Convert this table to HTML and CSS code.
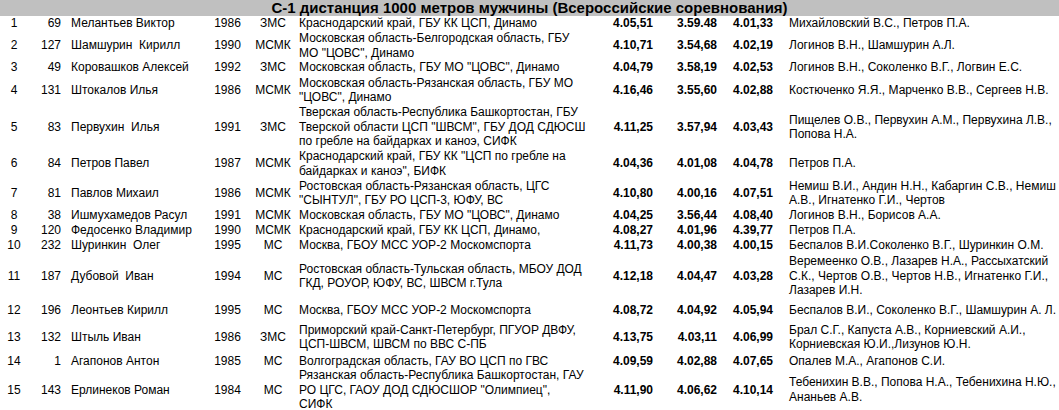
FILE: index.html
```html
<!DOCTYPE html>
<html lang="ru">
<head>
<meta charset="utf-8">
<title>С-1 дистанция 1000 метров мужчины</title>
<link rel="stylesheet" href="styles.css">
</head>
<body>
<div class="title">С-1 дистанция 1000 метров мужчины (Всероссийские соревнования)</div>
<table class="results">
<colgroup>
<col class="c-place"><col class="c-bib"><col class="c-name"><col class="c-year"><col class="c-rank"><col class="c-org"><col class="c-t1"><col class="c-t2"><col class="c-t3"><col class="c-coach">
</colgroup>
<tbody>
<tr class="h1"><td class="place">1</td><td class="bib">69</td><td class="name">Мелантьев Виктор</td><td class="year">1986</td><td class="rank">ЗМС</td><td class="org">Краснодарский край, ГБУ КК ЦСП, Динамо</td><td class="t1">4.05,51</td><td class="t2">3.59.48</td><td class="t3">4.01,33</td><td class="coach">Михайловский В.С., Петров П.А.</td></tr>
<tr class="h2"><td class="place">2</td><td class="bib">127</td><td class="name">Шамшурин&nbsp; Кирилл</td><td class="year">1990</td><td class="rank">МСМК</td><td class="org">Московская область-Белгородская область, ГБУ<br>МО "ЦОВС", Динамо</td><td class="t1">4.10,71</td><td class="t2">3.54,68</td><td class="t3">4.02,19</td><td class="coach">Логинов В.Н., Шамшурин А.Л.</td></tr>
<tr class="h1"><td class="place">3</td><td class="bib">49</td><td class="name">Коровашков Алексей</td><td class="year">1992</td><td class="rank">ЗМС</td><td class="org">Московская область, ГБУ МО "ЦОВС", Динамо</td><td class="t1">4.04,79</td><td class="t2">3.58,19</td><td class="t3">4.02,53</td><td class="coach">Логинов В.Н., Соколенко В.Г., Логвин Е.С.</td></tr>
<tr class="h2b"><td class="place">4</td><td class="bib">131</td><td class="name">Штокалов Илья</td><td class="year">1986</td><td class="rank">МСМК</td><td class="org">Московская область-Рязанская область, ГБУ МО<br>"ЦОВС", Динамо</td><td class="t1">4.16,46</td><td class="t2">3.55,60</td><td class="t3">4.02,88</td><td class="coach">Костюченко Я.Я., Марченко В.В., Сергеев Н.В.</td></tr>
<tr class="h3"><td class="place">5</td><td class="bib">83</td><td class="name">Первухин&nbsp; Илья</td><td class="year">1991</td><td class="rank">ЗМС</td><td class="org">Тверская область-Республика Башкортостан, ГБУ<br>Тверской области ЦСП "ШВСМ", ГБУ ДОД СДЮСШ<br>по гребле на байдарках и каноэ, СИФК</td><td class="t1">4.11,25</td><td class="t2">3.57,94</td><td class="t3">4.03,43</td><td class="coach">Пищелев О.В., Первухин А.М., Первухина Л.В.,<br>Попова Н.А.</td></tr>
<tr class="h2"><td class="place">6</td><td class="bib">84</td><td class="name">Петров Павел</td><td class="year">1987</td><td class="rank">МСМК</td><td class="org">Краснодарский край, ГБУ КК "ЦСП по гребле на<br>байдарках и каноэ", БИФК</td><td class="t1">4.04,36</td><td class="t2">4.01,08</td><td class="t3">4.04,78</td><td class="coach">Петров П.А.</td></tr>
<tr class="h2b"><td class="place">7</td><td class="bib">81</td><td class="name">Павлов Михаил</td><td class="year">1986</td><td class="rank">МСМК</td><td class="org">Ростовская область-Рязанская область, ЦГС<br>"СЫНТУЛ", ГБУ РО ЦСП-3, ЮФУ, ВС</td><td class="t1">4.10,80</td><td class="t2">4.00,16</td><td class="t3">4.07,51</td><td class="coach">Немиш В.И., Андин Н.Н., Кабаргин С.В., Немиш<br>А.В., Игнатенко Г.И., Чертов</td></tr>
<tr class="h1"><td class="place">8</td><td class="bib">38</td><td class="name">Ишмухамедов Расул</td><td class="year">1991</td><td class="rank">МСМК</td><td class="org">Московская область, ГБУ МО "ЦОВС", Динамо</td><td class="t1">4.04,25</td><td class="t2">3.56,44</td><td class="t3">4.08,40</td><td class="coach">Логинов В.Н., Борисов А.А.</td></tr>
<tr class="h1s"><td class="place">9</td><td class="bib">120</td><td class="name">Федосенко Владимир</td><td class="year">1990</td><td class="rank">МСМК</td><td class="org">Краснодарский край, ГБУ КК ЦСП, Динамо,</td><td class="t1">4.08,27</td><td class="t2">4.01,96</td><td class="t3">4.39,77</td><td class="coach">Петров П.А.</td></tr>
<tr class="h1"><td class="place">10</td><td class="bib">232</td><td class="name">Шуринкин&nbsp; Олег</td><td class="year">1995</td><td class="rank">МС</td><td class="org">Москва, ГБОУ МСС УОР-2 Москомспорта</td><td class="t1">4.11,73</td><td class="t2">4.00,38</td><td class="t3">4.00,15</td><td class="coach">Беспалов В.И.Соколенко В.Г., Шуринкин О.М.</td></tr>
<tr class="h3x"><td class="place">11</td><td class="bib">187</td><td class="name">Дубовой&nbsp; Иван</td><td class="year">1994</td><td class="rank">МС</td><td class="org">Ростовская область-Тульская область, МБОУ ДОД<br>ГКД, РОУОР, ЮФУ, ВС, ШВСМ г.Тула</td><td class="t1">4.12,18</td><td class="t2">4.04,47</td><td class="t3">4.03,28</td><td class="coach">Веремеенко О.В., Лазарев Н.А., Рассыхатский<br>С.К., Чертов О.В., Чертов Н.В., Игнатенко Г.И.,<br>Лазарев И.Н.</td></tr>
<tr class="h1x"><td class="place">12</td><td class="bib">196</td><td class="name">Леонтьев Кирилл</td><td class="year">1995</td><td class="rank">МС</td><td class="org">Москва, ГБОУ МСС УОР-2 Москомспорта</td><td class="t1">4.08,72</td><td class="t2">4.04,92</td><td class="t3">4.05,94</td><td class="coach">Беспалов В.И., Соколенко В.Г., Шамшурин А. Л.</td></tr>
<tr class="h2x"><td class="place">13</td><td class="bib">132</td><td class="name">Штыль Иван</td><td class="year">1986</td><td class="rank">ЗМС</td><td class="org">Приморский край-Санкт-Петербург, ПГУОР ДВФУ,<br>ЦСП-ШВСМ, ШВСМ по ВВС С-ПБ</td><td class="t1">4.13,75</td><td class="t2">4.03,11</td><td class="t3">4.06,99</td><td class="coach">Брал С.Г., Капуста А.В., Корниевский А.И.,<br>Корниевская Ю.И.,Лизунов Ю.Н.</td></tr>
<tr class="h1s"><td class="place">14</td><td class="bib">1</td><td class="name">Агапонов Антон</td><td class="year">1985</td><td class="rank">МС</td><td class="org">Волгоградская область, ГАУ ВО ЦСП по ГВС</td><td class="t1">4.09,59</td><td class="t2">4.02,88</td><td class="t3">4.07,65</td><td class="coach">Опалев М.А., Агапонов С.И.</td></tr>
<tr class="h3s"><td class="place">15</td><td class="bib">143</td><td class="name">Ерлинеков Роман</td><td class="year">1984</td><td class="rank">МС</td><td class="org">Рязанская область-Республика Башкортостан, ГАУ<br>РО ЦГС, ГАОУ ДОД СДЮСШОР "Олимпиец",<br>СИФК</td><td class="t1">4.11,90</td><td class="t2">4.06,62</td><td class="t3">4.10,14</td><td class="coach">Тебенихин В.В., Попова Н.А., Тебенихина Н.Ю.,<br>Ананьев А.В.</td></tr>
</tbody>
</table>
</body>
</html>
```

FILE: styles.css
```css
html, body {
  margin: 0;
  padding: 0;
  overflow: hidden;
  background: #ffffff;
}

body {
  font-family: "Liberation Sans", Arial, Helvetica, sans-serif;
  font-size: 12px;
  color: #000000;
}

.title {
  height: 16px;
  background: #c0c0c0;
  font-weight: bold;
  font-size: 15px;
  line-height: 16px;
  text-align: center;
  white-space: nowrap;
}

.results {
  width: 1059px;
  border-collapse: collapse;
  table-layout: fixed;
}

.results td {
  padding: 0;
  line-height: 14.5px;
  vertical-align: middle;
  white-space: nowrap;
  overflow: visible;
}

.c-place { width: 28px; }
.c-bib { width: 36px; }
.c-name { width: 141px; }
.c-year { width: 45px; }
.c-rank { width: 46px; }
.c-org { width: 304px; }
.c-t1 { width: 60px; }
.c-t2 { width: 65px; }
.c-t3 { width: 55px; }
.c-coach { width: 279px; }

.place { text-align: center; }
.bib { text-align: right; padding-right: 3px !important; }
.name { padding-left: 7px !important; }
.year { text-align: center; }
.rank { text-align: center; }
.org { padding-left: 3px !important; }
.t1, .t2, .t3 { font-weight: bold; text-align: right; }
.t1 { padding-right: 7px !important; }
.t2 { padding-right: 8px !important; }
.t3 { padding-right: 7px !important; }
.coach { padding-left: 9px !important; }

.h1 td { height: 15px; }
.h1s td { height: 14.5px; }
.h1x td { height: 21px; }
.h2 td { height: 29px; }
.h2b td { height: 30px; }
.h2x td { height: 33px; }
.h3 td { height: 44px; }
.h3s td { height: 43.5px; }
.h3x td { height: 47px; }
```
